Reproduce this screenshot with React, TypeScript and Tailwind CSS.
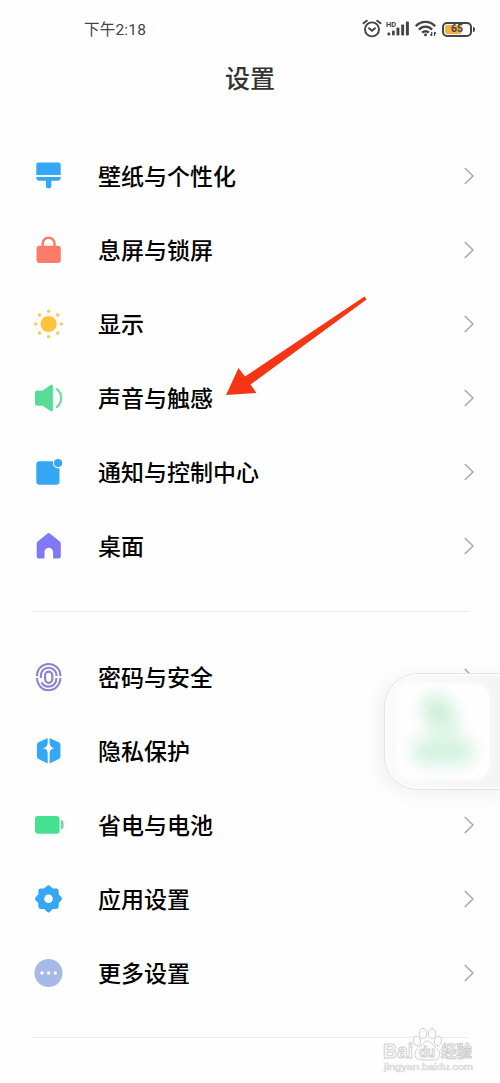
import type { ReactNode } from 'react'

type Item = {
  label: string
  icon: ReactNode
}

const SUN_ANGLES = [0, 45, 90, 135, 180, 225, 270, 315]

function Icon({ children }: { children: ReactNode }) {
  return (
    <svg viewBox="0 0 32 32" className="h-8 w-8 shrink-0" fill="none">
      {children}
    </svg>
  )
}

const displayItems: Item[] = [
  {
    label: '壁纸与个性化',
    icon: (
      <Icon>
        <path d="M6.5 2.5h20a2.2 2.2 0 0 1 2.2 2.2V15H4.3V4.7a2.2 2.2 0 0 1 2.2-2.2z" fill="#35a8f5" />
        <path d="M4.3 17h24.4v.8a3 3 0 0 1-3 3h-6.4v5a2.7 2.7 0 0 1-5.4 0v-5H7.3a3 3 0 0 1-3-3z" fill="#35a8f5" />
      </Icon>
    ),
  },
  {
    label: '息屏与锁屏',
    icon: (
      <Icon>
        <path d="M10.7 13V9.6a5.9 5.9 0 0 1 11.8 0V13" stroke="#fb7a68" strokeWidth="2.4" />
        <rect x="4.5" y="11.7" width="24.3" height="17.3" rx="3" fill="#fb7a68" />
      </Icon>
    ),
  },
  {
    label: '显示',
    icon: (
      <Icon>
        <circle cx="16.6" cy="16" r="8.1" fill="#fdc33c" />
        {SUN_ANGLES.map((a) => (
          <circle key={a} cx="16.6" cy="3.2" r="1.8" fill="#f8cd62" transform={`rotate(${a} 16.6 16)`} />
        ))}
      </Icon>
    ),
  },
  {
    label: '声音与触感',
    icon: (
      <Icon>
        <path d="M5.3 8.5h5.5l7.5-5.3c1.2-.8 2.6-.4 2.6 1V28c0 1.4-1.4 1.8-2.6 1l-7.5-5.3H5.3A2.3 2.3 0 0 1 3 21.4V10.8a2.3 2.3 0 0 1 2.3-2.3z" fill="#56dd98" />
        <path d="M25 7.2c5.5 4.5 5.5 13.3 0 17.8" stroke="#6fdfa6" strokeWidth="2.3" strokeLinecap="round" />
      </Icon>
    ),
  },
  {
    label: '通知与控制中心',
    icon: (
      <Icon>
        <rect x="4.3" y="5.3" width="23.2" height="23.5" rx="3.2" fill="#35a8f5" />
        <circle cx="26.1" cy="7.1" r="5.2" fill="#fefefe" />
        <circle cx="26.1" cy="7.1" r="4.1" fill="#35a8f5" />
      </Icon>
    ),
  },
  {
    label: '桌面',
    icon: (
      <Icon>
        <path d="M15.2 3.7a2.3 2.3 0 0 1 3 0l9.3 7.5c.9.7 1.3 1.6 1.3 2.7v12.3a2.2 2.2 0 0 1-2.2 2.2h-5.5v-6.3a4.3 4.3 0 0 0-8.6 0v6.3H6.9a2.2 2.2 0 0 1-2.2-2.2V13.9c0-1.1.4-2 1.3-2.7z" fill="#8078f4" />
      </Icon>
    ),
  },
]

const securityItems: Item[] = [
  {
    label: '密码与安全',
    icon: (
      <Icon>
        <g stroke="#8d83cf" strokeWidth="2.1">
          <path d="M5.1 15.3v-.9C5.1 7.8 10.2 3 16.6 3s11.7 4.8 11.7 11.4v.9" />
          <path d="M5.1 17c0 6.900 5 12.200 11.500 12.200S28.300 24 28.300 17" />
          <path d="M8.9 17v-2.5c0-4.5 3.2-7.8 7.7-7.8s7.9 3.3 7.9 7.8V15" />
          <path d="M24.5 17c0 5-3.3 8.6-7.9 8.6-3.3 0-5.7-1.5-7-4.4" />
          <rect x="13.1" y="10.6" width="7.2" height="11.2" rx="3.6" strokeWidth="2.2" />
        </g>
      </Icon>
    ),
  },
  {
    label: '隐私保护',
    icon: (
      <Icon>
        <path d="M15.7 3v5.1c-.3 3.2-1.6 4.6-4.8 5.1 3.2.5 4.5 1.9 4.8 5.1v10.1L6.5 24A3 3 0 0 1 4.9 21.4V9.9a3 3 0 0 1 1.6-2.6z" fill="#35a8f5" />
        <path d="M17.6 3v5.1c.3 3.2 1.6 4.6 4.8 5.1-3.2.5-4.5 1.9-4.8 5.1v10.1l9.2-4.4a3 3 0 0 0 1.6-2.6V9.9a3 3 0 0 0-1.6-2.6z" fill="#35a8f5" />
      </Icon>
    ),
  },
  {
    label: '省电与电池',
    icon: (
      <Icon>
        <rect x="3" y="7" width="24.6" height="17.8" rx="3.2" fill="#45e090" />
        <path d="M28.9 11.3h.8a1.8 1.8 0 0 1 1.8 1.8v5.2a1.8 1.8 0 0 1-1.8 1.8h-.8z" fill="#62dd9d" />
      </Icon>
    ),
  },
  {
    label: '应用设置',
    icon: (
      <Icon>
        {/* 两个圆角方块错开 45° 组成八角齿轮 */}
        <rect x="6.3" y="5.6" width="20.4" height="20.4" rx="2.4" fill="#35a8f5" />
        <rect x="6.3" y="5.6" width="20.4" height="20.4" rx="2.4" fill="#35a8f5" transform="rotate(45 16.5 15.8)" />
        <circle cx="16.5" cy="15.8" r="4.3" fill="#fefefe" />
      </Icon>
    ),
  },
  {
    label: '更多设置',
    icon: (
      <Icon>
        <circle cx="16.5" cy="16" r="14" fill="#a7b9e6" />
        <circle cx="10" cy="16" r="1.7" fill="white" />
        <circle cx="16.6" cy="16" r="1.7" fill="white" />
        <circle cx="23.2" cy="16" r="1.7" fill="white" />
      </Icon>
    ),
  },
]

function StatusBar() {
  return (
    <div className="flex h-[58px] items-center justify-between pr-[25px] pl-[84px] text-[#444]">
      <span className="pt-[3px] font-[Roboto,'Noto_Sans_CJK_SC',sans-serif] text-[15.5px] leading-none tracking-[0.2px]">下午2:18</span>
      <div className="flex items-center">
        {/* 闹钟 */}
        <svg viewBox="0 0 20 20" className="h-5 w-5" fill="none" stroke="#444" strokeWidth="1.9" strokeLinecap="round">
          <circle cx="10" cy="10.4" r="7" />
          <path d="M1.5 4.3 4.8 1.7M18.5 4.3 15.2 1.7M7 9.2l3 2.5 3-2.5" />
        </svg>
        {/* 信号 */}
        <div className="relative ml-1 h-5 w-6">
          <span className="absolute top-[2px] left-0 font-[Roboto,sans-serif] text-[7.5px] leading-none font-bold">HD</span>
          <svg viewBox="0 0 24 20" className="h-5 w-6" fill="#444">
            <rect x="1.5" y="13.5" width="2.7" height="3" rx="1" />
            <rect x="6" y="11.5" width="2.7" height="5" rx="1" />
            <rect x="10.5" y="8.5" width="2.9" height="8" rx="1" />
            <rect x="15.2" y="5.5" width="2.9" height="11" rx="1" />
            <rect x="19.9" y="2.5" width="3" height="14" rx="1" />
          </svg>
        </div>
        {/* WiFi */}
        <svg viewBox="0 0 24 20" className="ml-[5px] h-5 w-6" fill="none" stroke="#444" strokeWidth="2.4">
          <path d="M.8 7.2a13 13 0 0 1 19.4 0M3.9 10.6a8.8 8.8 0 0 1 13.2 0M7.2 13.7a4.6 4.6 0 0 1 6.6 0" />
          <circle cx="10.5" cy="15.8" r="1.5" fill="#444" stroke="none" />
          <path d="M16.7 13v4m0-.2-1.5-1.5M19.5 17v-4m0 .2 1.5 1.5" strokeWidth="1.2" />
        </svg>
        {/* 电量 */}
        <div className="ml-[3px] flex items-center">
          <div className="flex h-[15px] w-[30px] items-center rounded-[5px] border-2 border-[#444] p-px">
            <div className="flex h-full w-full items-center justify-center rounded-[2px] bg-linear-to-r from-[#f5b043] from-65% to-[#fefefe] to-65%">
              <span className="font-[Roboto,sans-serif] text-[10.5px] leading-none font-bold">65</span>
            </div>
          </div>
          <div className="ml-px h-[5px] w-[2px] rounded-r bg-[#444]" />
        </div>
      </div>
    </div>
  )
}

function SettingRow({ label, icon }: Item) {
  return (
    <div className="flex h-[74px] items-center pr-[26px] pl-8">
      {icon}
      <span className="ml-[34px] flex-1 pb-[2px] text-[23px] leading-none font-medium text-black">{label}</span>
      <svg viewBox="0 0 10 18" className="h-[18px] w-[10px]" fill="none" stroke="#a8a8a8" strokeWidth="1.5">
        <path d="M.8 1 9 9 .8 17" />
      </svg>
    </div>
  )
}

function FloatingWidget() {
  return (
    <div className="absolute top-[673px] left-[384px] h-[117px] w-[150px] rounded-[34px] border border-[#e4e4e4] bg-[#f6f6f6] shadow-[-5px_3px_20px_rgba(0,0,0,0.06)]">
      <div className="h-full w-full rounded-[33px] border-2 border-[#fbfbfb] bg-linear-to-r from-[#fafafa] to-[#f3f3f3] pt-[8px] pl-[10px]">
        <div className="relative h-[95px] w-[92px] overflow-hidden rounded-[14px] bg-[#fefefe] shadow-[0_0_5px_#fefefe]">
          <div className="absolute top-[10px] left-[28px] h-[38px] w-[28px] rotate-[-35deg] rounded-full bg-[#cdf0da] blur-[8px]" />
          <div className="absolute top-[36px] left-[36px] h-[22px] w-[24px] rounded-full bg-[#ddf4e6] blur-[7px]" />
          <div className="absolute top-[54px] left-[15px] h-[26px] w-[62px] rounded-full bg-[#d3f2df] blur-[8px]" />
        </div>
      </div>
    </div>
  )
}

function Watermark() {
  return (
    <div className="absolute top-[1024px] left-[382px] h-[50px] w-[94px] font-['Liberation_Sans',sans-serif]">
      <svg viewBox="0 0 94 50" className="h-full w-full" fill="#fefefe" stroke="#cfcfcf" strokeWidth="1">
        <ellipse cx="35" cy="17" rx="3.5" ry="4.7" transform="rotate(-15 35 17)" />
        <ellipse cx="41" cy="9.5" rx="3.7" ry="5.2" />
        <ellipse cx="50" cy="9.5" rx="3.7" ry="5.2" />
        <ellipse cx="56" cy="17" rx="3.5" ry="4.7" transform="rotate(15 56 17)" />
        <path d="M45.5 17c-3.5 0-5 3.5-8 6-3.5 3-5 5-4.3 8.5 1 5 6 4.5 12.3 4.5s11.3.5 12-4.5c.6-3.5-1-5.5-4.5-8.5-3-2.5-4-6-7.5-6z" />
        <text x="1" y="34" fontSize="21" fontWeight="bold" textLength="30" lengthAdjust="spacingAndGlyphs">Bai</text>
        <text x="37" y="32.5" fontSize="14" fontWeight="bold" textLength="16" lengthAdjust="spacingAndGlyphs">du</text>
        <text x="59" y="33" fontSize="15.5" fontWeight="bold" textLength="31" fontFamily="Noto Sans CJK SC">经验</text>
        <text x="2" y="46" fontSize="9" textLength="89" lengthAdjust="spacingAndGlyphs" stroke="#dcdcdc" strokeWidth="0.7">
          jingyan.baidu.com
        </text>
      </svg>
    </div>
  )
}

export default function App() {
  return (
    <div className="relative h-[1083px] w-[500px] overflow-hidden bg-[#fefefe] font-['Noto_Sans_CJK_SC',sans-serif]">
      <StatusBar />
      <h1 className="flex h-[81px] justify-center pt-[6px] text-[25px] leading-[26px] font-medium text-[#333]">设置</h1>
      {displayItems.map((item) => (
        <SettingRow key={item.label} {...item} />
      ))}
      <div className="mx-8 mt-[28px] mb-[28px] h-px bg-[#ececec]" />
      {securityItems.map((item) => (
        <SettingRow key={item.label} {...item} />
      ))}
      <div className="mx-8 mt-[27px] h-px bg-[#ececec]" />
      <FloatingWidget />
      {/* 指向「声音与触感」的箭头 */}
      <svg viewBox="0 0 145 105" className="absolute top-[293px] left-[224px] h-[105px] w-[145px]">
        <path d="M2 102 14.5 75l6.5 8.5L140.500 3.500l2 3L26.500 91.500l6 8.500z" fill="#f63514" />
      </svg>
      <Watermark />
    </div>
  )
}
